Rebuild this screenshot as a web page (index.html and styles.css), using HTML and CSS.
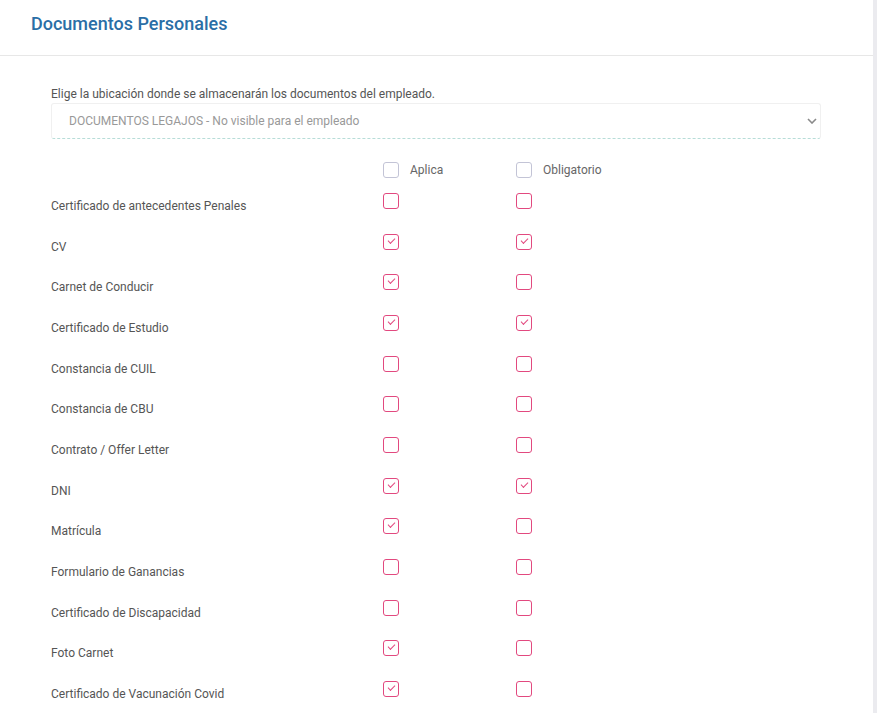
FILE: index.html
```html
<!DOCTYPE html>
<html lang="es">
<head>
<meta charset="utf-8">
<title>Documentos Personales</title>
<link rel="stylesheet" href="styles.css">
</head>
<body>
<div class="frame">
  <main class="panel">
    <header class="panel-head">
      <h1 class="title">Documentos Personales</h1>
    </header>
    <section class="panel-body">
      <label class="hint">Elige la ubicación donde se almacenarán los documentos del empleado.</label>
      <div class="select">
        <span class="select-text">DOCUMENTOS LEGAJOS - No visible para el empleado</span>
        <svg class="chev" width="10" height="6" viewBox="0 0 10 6"><path d="M1 1 L5 5 L9 1" fill="none" stroke="#8a8a8a" stroke-width="1.6"/></svg>
      </div>

      <div class="table">
        <div class="row head">
          <span class="name"></span>
          <span class="cell"><span class="box neutral"></span><span class="cap">Aplica</span></span>
          <span class="cell"><span class="box neutral"></span><span class="cap">Obligatorio</span></span>
        </div>
        <div class="row"><span class="name">Certificado de antecedentes Penales</span><span class="cell"><span class="box"></span></span><span class="cell"><span class="box"></span></span></div>
        <div class="row"><span class="name">CV</span><span class="cell"><span class="box on"></span></span><span class="cell"><span class="box on"></span></span></div>
        <div class="row"><span class="name">Carnet de Conducir</span><span class="cell"><span class="box on"></span></span><span class="cell"><span class="box"></span></span></div>
        <div class="row"><span class="name">Certificado de Estudio</span><span class="cell"><span class="box on"></span></span><span class="cell"><span class="box on"></span></span></div>
        <div class="row"><span class="name">Constancia de CUIL</span><span class="cell"><span class="box"></span></span><span class="cell"><span class="box"></span></span></div>
        <div class="row"><span class="name">Constancia de CBU</span><span class="cell"><span class="box"></span></span><span class="cell"><span class="box"></span></span></div>
        <div class="row"><span class="name">Contrato / Offer Letter</span><span class="cell"><span class="box"></span></span><span class="cell"><span class="box"></span></span></div>
        <div class="row"><span class="name">DNI</span><span class="cell"><span class="box on"></span></span><span class="cell"><span class="box on"></span></span></div>
        <div class="row"><span class="name">Matrícula</span><span class="cell"><span class="box on"></span></span><span class="cell"><span class="box"></span></span></div>
        <div class="row"><span class="name">Formulario de Ganancias</span><span class="cell"><span class="box"></span></span><span class="cell"><span class="box"></span></span></div>
        <div class="row"><span class="name">Certificado de Discapacidad</span><span class="cell"><span class="box"></span></span><span class="cell"><span class="box"></span></span></div>
        <div class="row"><span class="name">Foto Carnet</span><span class="cell"><span class="box on"></span></span><span class="cell"><span class="box"></span></span></div>
        <div class="row"><span class="name">Certificado de Vacunación Covid</span><span class="cell"><span class="box on"></span></span><span class="cell"><span class="box"></span></span></div>
      </div>
    </section>
  </main>
  <div class="edge"></div>
</div>
</body>
</html>
```
FILE: styles.css
```css
html, body {
  margin: 0;
  padding: 0;
  background: #ffffff;
  height: 100%;
  overflow: hidden;
}
body {
  font-family: Roboto, "Liberation Sans", sans-serif;
  color: #555;
}
.frame {
  display: flex;
  height: 713px;
}
.panel {
  flex: 1;
  background: #fff;
}
.edge {
  width: 4px;
  background: #ebebef;
}
.panel-head {
  height: 56px;
  border-bottom: 1px solid #e7e7e7;
  display: flex;
  align-items: center;
  padding-left: 31px;
  box-sizing: border-box;
}
.title {
  margin: 0;
  font-size: 18px;
  font-weight: 500;
  color: #2a6ea6;
  position: relative;
  top: -4px;
}
.panel-body {
  padding: 31px 52px 0 51px;
}
.hint {
  display: block;
  font-size: 12px;
  color: #555;
  line-height: 14px;
}
.select {
  margin-top: 2px;
  height: 36px;
  box-sizing: border-box;
  border: 1px solid #f0f0f0;
  border-bottom: 1px dashed #b7ddd8;
  border-radius: 3px;
  display: flex;
  align-items: center;
  justify-content: space-between;
  padding: 0 2px 0 17px;
}
.select-text {
  font-size: 12px;
  color: #999;
}
.chev {
  margin-right: 1px;
}
.table {
  margin-top: 23px;
}
.row {
  display: grid;
  grid-template-columns: 332px 133px 1fr;
  height: 40.67px;
}
.row.head {
  height: 31px;
}
.name {
  font-size: 12px;
  color: #555;
  padding-top: 6px;
  line-height: 14px;
}
.cell {
  display: flex;
  align-items: flex-start;
  gap: 11px;
}
.cap {
  font-size: 12px;
  color: #666;
  line-height: 16px;
}
.box {
  width: 16px;
  height: 16px;
  box-sizing: border-box;
  border: 1.5px solid #e2497f;
  border-radius: 3px;
  position: relative;
  background: #fff;
}
.box.neutral {
  border: 1px solid #c3c4d6;
}
.box.on::after {
  content: "";
  position: absolute;
  left: 4px;
  top: 3px;
  width: 6px;
  height: 3px;
  border-left: 1.2px solid #e2497f;
  border-bottom: 1.2px solid #e2497f;
  transform: rotate(-45deg);
}
```
